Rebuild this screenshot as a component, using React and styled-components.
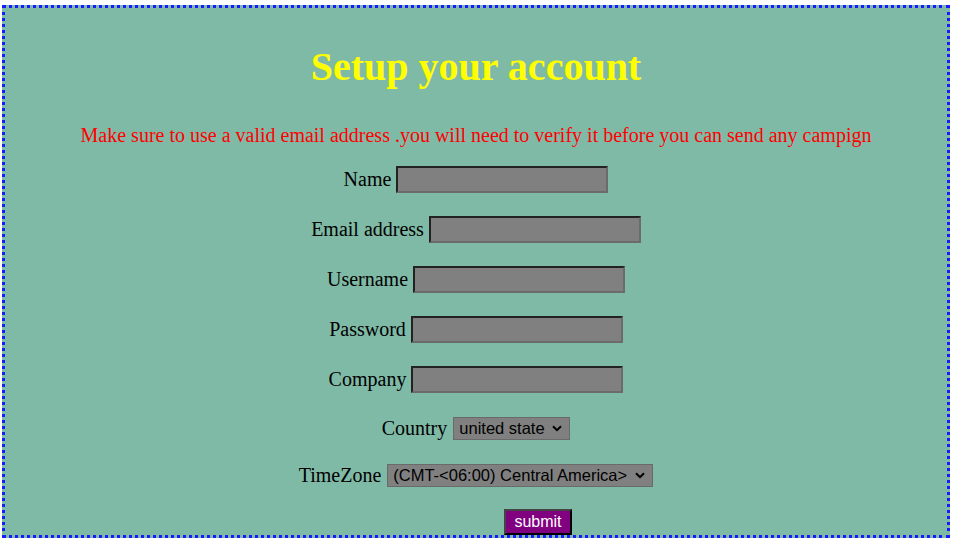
import React from "react";
import styled, { createGlobalStyle } from "styled-components";

const GlobalStyle = createGlobalStyle`
  html, body { margin: 0; padding: 0; background: #ffffff; }
  body { font-family: "Liberation Serif", "Times New Roman", serif; }
`;

const Frame = styled.form`
  box-sizing: border-box;
  margin: 5px 5px 7px 2px;
  width: 948px;
  height: 533px;
  border: 3px dotted #1a1aff;
  background: #7fbaa7;
  display: flex;
  flex-direction: column;
  align-items: center;
`;

const Title = styled.h1`
  margin: 36px 0 0;
  font-family: "Liberation Serif", "Times New Roman", serif;
  font-weight: bold;
  font-size: 40px;
  line-height: 46px;
  color: #ffff00;
`;

const Notice = styled.p`
  margin: 34px 0 0;
  font-size: 20px;
  line-height: 23px;
  color: #ff0000;
`;

const Row = styled.div`
  display: flex;
  align-items: center;
  justify-content: center;
  gap: 5px;
  height: 27px;
  margin-top: ${(p) => p.$top}px;
  padding-left: ${(p) => p.$shift || 0}px;
  font-size: 20px;
  color: #000;
`;

const Label = styled.label`
  font-size: 20px;
  line-height: 23px;
`;

const TextInput = styled.input`
  box-sizing: border-box;
  width: 212px;
  height: 27px;
  margin: 0;
  padding: 0 3px;
  background: #808080;
  border: 2px solid;
  border-color: #222222 #6b6b6b #6b6b6b #222222;
  outline: none;
`;

const SelectWrap = styled.span`
  position: relative;
  display: inline-flex;
  margin-left: 1px;
`;

const Select = styled.select`
  box-sizing: border-box;
  appearance: none;
  -webkit-appearance: none;
  height: 23px;
  margin: 0;
  padding: 0 24px 0 5px;
  background: #808080;
  border: 1px solid #6a6a6a;
  border-radius: 0;
  font-family: "Liberation Sans", Arial, sans-serif;
  font-size: 16.5px;
  line-height: 21px;
  color: #000;
  outline: none;
`;

const Chevron = styled.svg`
  position: absolute;
  right: 8px;
  top: 8px;
  width: 10px;
  height: 7px;
  pointer-events: none;
`;

const Submit = styled.button`
  box-sizing: border-box;
  height: 26px;
  margin: 0;
  padding: 0 8px;
  background: #800080;
  color: #ffffff;
  border: 2px solid;
  border-color: #444444 #000000 #000000 #444444;
  font-family: "Liberation Sans", Arial, sans-serif;
  font-size: 16px;
  line-height: 20px;
`;

const fields = [
  { label: "Name", top: 19 },
  { label: "Email address", top: 23 },
  { label: "Username", top: 23 },
  { label: "Password", top: 23 },
  { label: "Company", top: 23 },
];

function Dropdown({ children, value }) {
  return (
    <SelectWrap>
      <Select defaultValue={value}>{children}</Select>
      <Chevron viewBox="0 0 10 7">
        <polyline points="1,1.2 5,5.2 9,1.2" fill="none" stroke="#000" strokeWidth="2" />
      </Chevron>
    </SelectWrap>
  );
}

export default function App() {
  return (
    <>
      <GlobalStyle />
      <Frame onSubmit={(e) => e.preventDefault()}>
        <Title>Setup your account</Title>
        <Notice>
          Make sure to use a valid email address .you will need to verify it before you can send any campign
        </Notice>
        {fields.map((f) => (
          <Row key={f.label} $top={f.top}>
            <Label>{f.label}</Label>
            <TextInput type={f.label === "Password" ? "password" : "text"} />
          </Row>
        ))}
        <Row $top={22}>
          <Label>Country</Label>
          <Dropdown value="us">
            <option value="us">united state</option>
          </Dropdown>
        </Row>
        <Row $top={21}>
          <Label>TimeZone</Label>
          <Dropdown value="ca">
            <option value="ca">(CMT-&lt;06:00) Central America&gt;</option>
          </Dropdown>
        </Row>
        <Row $top={20} $shift={124}>
          <Submit type="submit">submit</Submit>
        </Row>
      </Frame>
    </>
  );
}
